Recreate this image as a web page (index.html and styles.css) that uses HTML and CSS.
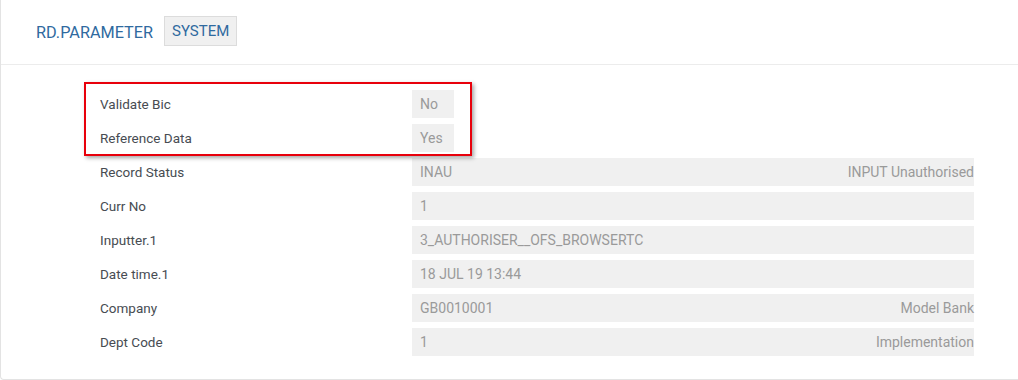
FILE: index.html
```html
<!DOCTYPE html>
<html lang="en">
<head>
    <meta charset="UTF-8">
    <title>RD.PARAMETER SYSTEM</title>
    <link rel="stylesheet" href="styles.css">
</head>
<body>

    <div class="panel">
        <!-- Cabecera con el id del registro -->
        <div class="panel-head">
            <span class="title">RD.PARAMETER</span>
            <span class="badge">SYSTEM</span>
        </div>

        <div class="panel-body">
            <div class="highlight"></div>

            <div class="row">
                <div class="label">Validate Bic</div>
                <div class="value short">No</div>
            </div>
            <div class="row">
                <div class="label">Reference Data</div>
                <div class="value short">Yes</div>
            </div>
            <div class="row">
                <div class="label">Record Status</div>
                <div class="value"><span>INAU</span><span class="enrich">INPUT Unauthorised</span></div>
            </div>
            <div class="row">
                <div class="label">Curr No</div>
                <div class="value"><span>1</span></div>
            </div>
            <div class="row">
                <div class="label">Inputter.1</div>
                <div class="value"><span>3_AUTHORISER__OFS_BROWSERTC</span></div>
            </div>
            <div class="row">
                <div class="label">Date time.1</div>
                <div class="value"><span>18 JUL 19 13:44</span></div>
            </div>
            <div class="row">
                <div class="label">Company</div>
                <div class="value"><span>GB0010001</span><span class="enrich">Model Bank</span></div>
            </div>
            <div class="row">
                <div class="label">Dept Code</div>
                <div class="value"><span>1</span><span class="enrich">Implementation</span></div>
            </div>
        </div>
    </div>

</body>
</html>
```

FILE: styles.css
```css
body {
    font-family: Roboto, "Liberation Sans", sans-serif;
    margin: 0;
    padding: 0;
    background-color: #fff;
    overflow: hidden;
}

.panel {
    height: 380px;
    box-sizing: border-box;
    border-left: 1px solid #e3e3e3;
    border-bottom: 1px solid #e3e3e3;
    border-bottom-left-radius: 4px;
}

.panel-head {
    height: 65px;
    box-sizing: border-box;
    border-bottom: 1px solid #ececec;
    display: flex;
    align-items: center;
    padding-left: 35px;
}

.title {
    color: #2f6a9f;
    font-size: 16.25px;
}

.badge {
    margin-left: 11px;
    background-color: #f0f0f0;
    border: 1px solid #dcdcdc;
    color: #2f6a9f;
    font-size: 15px;
    height: 28px;
    line-height: 28px;
    padding: 0 7px;
    margin-top: -2px;
}

.panel-body {
    position: relative;
    padding: 25px 0 0 99px;
}

.row {
    display: flex;
    align-items: center;
    height: 28px;
    margin-bottom: 6px;
}

.label {
    width: 312px;
    color: #474c52;
    font-size: 13.5px;
}

.value {
    width: 562px;
    height: 28px;
    line-height: 28px;
    background-color: #f0f0f0;
    color: #9a9a9a;
    font-size: 14px;
    padding-left: 8px;
    box-sizing: border-box;
    display: flex;
    justify-content: space-between;
}

.value.short {
    width: 42px;
}

.highlight {
    position: absolute;
    left: 83px;
    top: 17px;
    width: 388px;
    height: 74px;
    box-sizing: border-box;
    border: 2px solid #e8000b;
    box-shadow: 2px 2px 4px rgba(0, 0, 0, 0.35);
}
```
